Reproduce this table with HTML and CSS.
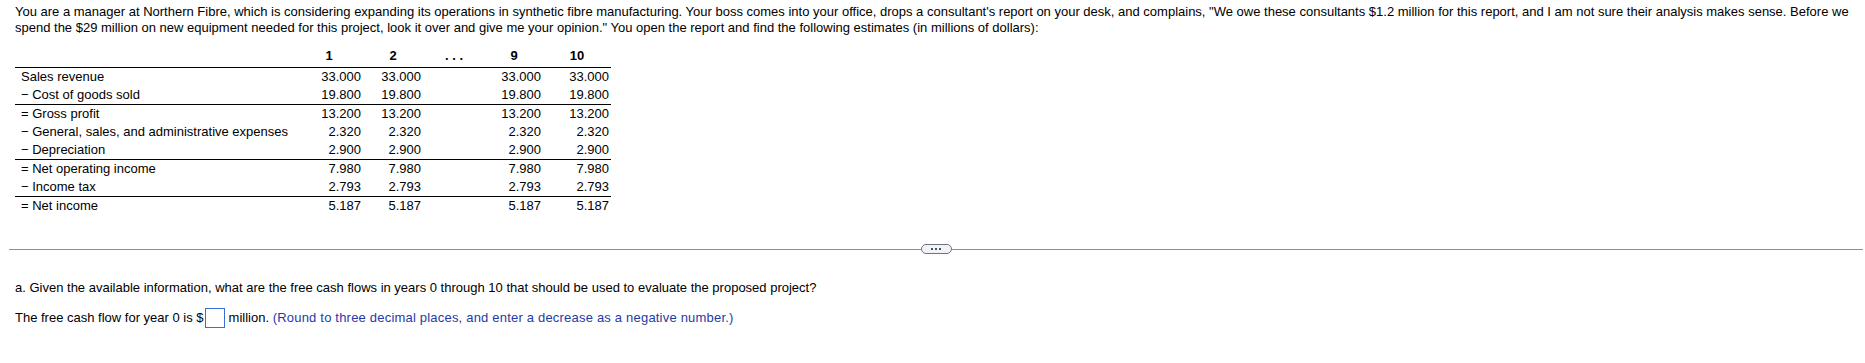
FILE: index.html
```html
<!DOCTYPE html>
<html lang="en">
<head>
<meta charset="utf-8">
<title>Northern Fibre</title>
<link rel="stylesheet" href="styles.css">
</head>
<body>
<div class="page">
  <p class="intro">You are a manager at Northern Fibre, which is considering expanding its operations in synthetic fibre manufacturing. Your boss comes into your office, drops a consultant's report on your desk, and complains, "We owe these consultants $1.2 million for this report, and I am not sure their analysis makes sense. Before we spend the $29 million on new equipment needed for this project, look it over and give me your opinion." You open the report and find the following estimates (in millions of dollars):</p>
  <table class="est">
    <colgroup>
      <col class="c-label"><col class="c-1"><col class="c-2"><col class="c-dots"><col class="c-9"><col class="c-10">
    </colgroup>
    <thead>
      <tr><th></th><th>1</th><th>2</th><th class="dots">. . .</th><th>9</th><th>10</th></tr>
    </thead>
    <tbody>
      <tr><td class="lbl">Sales revenue</td><td>33.000</td><td>33.000</td><td></td><td>33.000</td><td>33.000</td></tr>
      <tr><td class="lbl">&minus; Cost of goods sold</td><td>19.800</td><td>19.800</td><td></td><td>19.800</td><td>19.800</td></tr>
      <tr class="sum"><td class="lbl">= Gross profit</td><td>13.200</td><td>13.200</td><td></td><td>13.200</td><td>13.200</td></tr>
      <tr><td class="lbl">&minus; General, sales, and administrative expenses</td><td>2.320</td><td>2.320</td><td></td><td>2.320</td><td>2.320</td></tr>
      <tr><td class="lbl">&minus; Depreciation</td><td>2.900</td><td>2.900</td><td></td><td>2.900</td><td>2.900</td></tr>
      <tr class="sum"><td class="lbl">= Net operating income</td><td>7.980</td><td>7.980</td><td></td><td>7.980</td><td>7.980</td></tr>
      <tr><td class="lbl">&minus; Income tax</td><td>2.793</td><td>2.793</td><td></td><td>2.793</td><td>2.793</td></tr>
      <tr class="sum"><td class="lbl">= Net income</td><td>5.187</td><td>5.187</td><td></td><td>5.187</td><td>5.187</td></tr>
    </tbody>
  </table>
</div>
<div class="divider">
  <span class="rule"></span>
  <span class="pill"><i></i><i></i><i></i></span>
  <span class="rule"></span>
</div>
<div class="page question">
  <p class="q">a. Given the available information, what are the free cash flows in years 0 through 10 that should be used to evaluate the proposed project?</p>
  <p class="answer">The free cash flow for year 0 is $<span class="box"></span>million. <span class="hint">(Round to three decimal places, and enter a decrease as a negative number.)</span></p>
</div>
</body>
</html>
```
FILE: styles.css
```css
html, body {
  margin: 0;
  padding: 0;
  background: #fff;
}
body {
  font-family: "Liberation Sans", Arial, sans-serif;
  font-size: 13px;
  color: #000;
}
.page {
  padding: 4px 15px 0 15px;
}
.intro {
  margin: 0 0 11px 0;
  line-height: 16px;
}
.est {
  border-collapse: collapse;
  table-layout: fixed;
  width: 596px;
}
.c-label { width: 280px; }
.c-1 { width: 68px; }
.c-2 { width: 60px; }
.c-dots { width: 62px; }
.c-9 { width: 58px; }
.c-10 { width: 68px; }
.est th {
  font-weight: bold;
  text-align: center;
  vertical-align: bottom;
  height: 18px;
  line-height: 18px;
  padding: 0 0 2px 0;
  border-bottom: 1px solid #000;
}
.est td {
  height: 18px;
  line-height: 18px;
  padding: 0 2px 0 0;
  text-align: right;
  white-space: nowrap;
}
.est td.lbl {
  text-align: left;
  padding: 0 0 0 6px;
}
.est tr.sum td {
  border-top: 1px solid #000;
}
.divider {
  display: flex;
  align-items: center;
  margin: 29px 2px 0 9px;
  height: 10px;
}
.rule {
  flex: 1;
  height: 1px;
  background: #8a8e9a;
}
.pill {
  width: 29px;
  height: 8px;
  border: 1px solid #6c7382;
  border-radius: 5px;
  background: #f2f3f6;
  display: flex;
  align-items: center;
  justify-content: center;
  gap: 2px;
}
.pill i {
  display: block;
  width: 2px;
  height: 2px;
  background: #4d5463;
}
.question {
  padding-top: 26px;
}
.q {
  margin: 0;
  line-height: 16px;
}
.answer {
  margin: 12px 0 0 0;
  line-height: 20px;
}
.box {
  display: inline-block;
  vertical-align: top;
  width: 18px;
  height: 18px;
  border: 1px solid #3a6fd8;
  margin: 0 4px 0 1px;
}
.hint {
  color: #1f3aa5;
  letter-spacing: 0.2px;
}
```
